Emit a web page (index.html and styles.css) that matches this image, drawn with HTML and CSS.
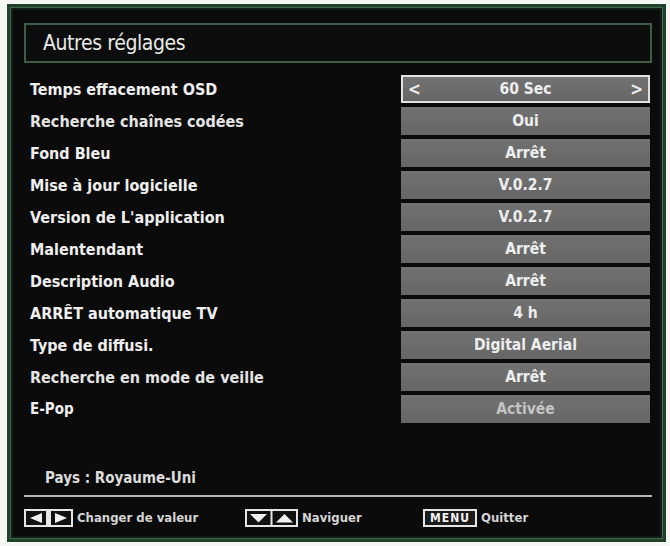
FILE: index.html
```html
<!DOCTYPE html>
<html lang="fr">
<head>
<meta charset="utf-8">
<title>Autres réglages</title>
<link rel="stylesheet" href="styles.css">
</head>
<body>
<div class="frame">
  <div class="title-box"><span class="title">Autres réglages</span></div>
  <div class="rows">
    <div class="row"><span class="label">Temps effacement OSD</span><span class="value selected"><span class="arr">&lt;</span><span class="vtext">60 Sec</span><span class="arr">&gt;</span></span></div>
    <div class="row"><span class="label light">Recherche chaînes codées</span><span class="value"><span class="vtext">Oui</span></span></div>
    <div class="row"><span class="label">Fond Bleu</span><span class="value"><span class="vtext">Arrêt</span></span></div>
    <div class="row"><span class="label">Mise à jour logicielle</span><span class="value"><span class="vtext">V.0.2.7</span></span></div>
    <div class="row"><span class="label">Version de L'application</span><span class="value"><span class="vtext">V.0.2.7</span></span></div>
    <div class="row"><span class="label">Malentendant</span><span class="value"><span class="vtext">Arrêt</span></span></div>
    <div class="row"><span class="label">Description Audio</span><span class="value"><span class="vtext">Arrêt</span></span></div>
    <div class="row"><span class="label">ARRÊT automatique TV</span><span class="value"><span class="vtext">4 h</span></span></div>
    <div class="row"><span class="label">Type de diffusi.</span><span class="value"><span class="vtext">Digital Aerial</span></span></div>
    <div class="row"><span class="label light">Recherche en mode de veille</span><span class="value"><span class="vtext">Arrêt</span></span></div>
    <div class="row"><span class="label small">E-Pop</span><span class="value dim"><span class="vtext">Activée</span></span></div>
  </div>
  <div class="pays">Pays : Royaume-Uni</div>
  <div class="sep"></div>
  <div class="footer">
    <div class="hint">
      <svg class="key" width="49" height="18" viewBox="0 0 49 18">
        <rect x="1" y="1" width="47" height="16" fill="#111" stroke="#e6e6e6" stroke-width="2"/>
        <rect x="22" y="2" width="5" height="14" fill="#e6e6e6"/>
        <path d="M18 4 L6 9 L18 14 Z" fill="#f0f0f0"/>
        <path d="M31 4 L43 9 L31 14 Z" fill="#f0f0f0"/>
      </svg>
      <span class="htext">Changer de valeur</span>
    </div>
    <div class="hint">
      <svg class="key" width="53" height="18" viewBox="0 0 53 18">
        <rect x="1" y="1" width="51" height="16" fill="#111" stroke="#e6e6e6" stroke-width="2"/>
        <line x1="26.5" y1="1" x2="26.5" y2="17" stroke="#e6e6e6" stroke-width="2"/>
        <path d="M5 5 L22 5 L13.5 13.5 Z" fill="#f0f0f0"/>
        <path d="M31 13.5 L48 13.5 L39.5 5 Z" fill="#f0f0f0"/>
      </svg>
      <span class="htext">Naviguer</span>
    </div>
    <div class="hint">
      <span class="menukey">MENU</span>
      <span class="htext">Quitter</span>
    </div>
  </div>
</div>
</body>
</html>
```
FILE: styles.css
```css
html, body {
  margin: 0;
  padding: 0;
  background: #f5f7f5;
}
body {
  width: 670px;
  height: 546px;
  overflow: hidden;
  font-family: "DejaVu Sans Condensed", "DejaVu Sans", sans-serif;
}
.frame {
  box-sizing: border-box;
  margin: 4px 0 0 7px;
  width: 659px;
  height: 538px;
  border: 3px solid #22402b;
  box-shadow: inset 0 0 0 1px #3f6a4c, inset 0 0 0 3px #101c14;
  background: #0b0b0b;
  padding: 16px 11px 0 14px;
  display: flex;
  flex-direction: column;
}
.title-box {
  box-sizing: border-box;
  height: 40px;
  border: 2px solid #3c5d46;
  display: flex;
  align-items: center;
  padding-left: 17px;
  background: #0d0d0d;
}
.title {
  color: #e8ebe8;
  font-size: 21px;
  font-weight: normal;
  letter-spacing: -0.4px;
}
.rows {
  margin-top: 12px;
  display: flex;
  flex-direction: column;
  gap: 4px;
}
.row {
  display: flex;
  align-items: center;
  height: 28px;
}
.label {
  flex: 1;
  padding-left: 6px;
  color: #eeeeee;
  font-size: 16px;
  font-weight: bold;
}
.label.light {
  color: #e4e4e4;
}
.label.small {
  font-size: 15px;
}
.value {
  box-sizing: border-box;
  width: 249px;
  height: 28px;
  margin-right: 2px;
  background: linear-gradient(#727272, #666666);
  display: flex;
  align-items: center;
  justify-content: center;
  color: #eeeeee;
  font-size: 15.5px;
  font-weight: bold;
}
.value.selected {
  border: 2px solid #e2e2e2;
  justify-content: space-between;
  padding: 0 5px;
}
.value.dim {
  color: #c4c4c4;
}
.vtext {
  text-align: center;
}
.value.selected .vtext {
  flex: 1;
}
.arr {
  font-size: 17px;
  font-weight: bold;
}
.pays {
  margin-top: 45px;
  padding-left: 21px;
  height: 20px;
  line-height: 20px;
  color: #dcdcdc;
  font-size: 15px;
  font-weight: bold;
}
.sep {
  margin-top: 7px;
  height: 2px;
  background: #b4b4b4;
}
.footer {
  margin-top: 11px;
  display: flex;
  align-items: center;
  height: 19px;
}
.hint {
  display: flex;
  align-items: center;
  gap: 4px;
}
.hint:nth-child(1) { width: 221px; }
.hint:nth-child(2) { width: 178px; }
.key {
  display: block;
}
.htext {
  color: #d4d4d4;
  font-size: 13px;
  font-weight: bold;
}
.menukey {
  box-sizing: border-box;
  width: 54px;
  height: 18px;
  text-align: center;
  border: 2px solid #e6e6e6;
  color: #f2f2f2;
  background: #1a1a1a;
  font-size: 12px;
  font-weight: bold;
  line-height: 14px;
  letter-spacing: 1px;
}
```
